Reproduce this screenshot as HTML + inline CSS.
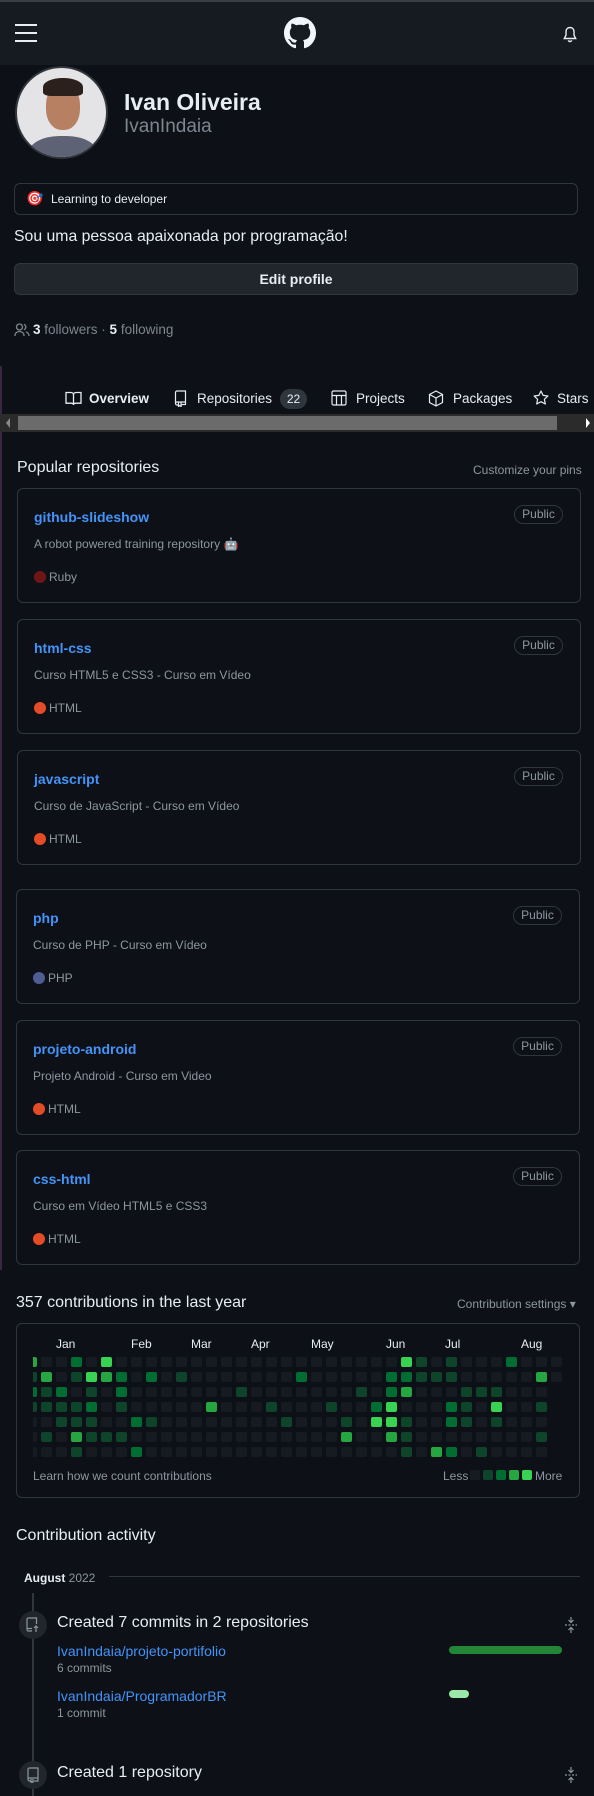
<!DOCTYPE html>
<html><head><meta charset="utf-8"><style>
*{box-sizing:border-box;margin:0;padding:0}
body{width:594px;height:1796px;background:#0d1117;color:#e6edf3;font-family:"Liberation Sans",sans-serif;position:relative;overflow:hidden}
.a{position:absolute;white-space:nowrap}
.card{position:absolute;left:17px;width:564px;height:115px;border:1px solid #30363d;border-radius:6px}
.card .n{position:absolute;left:16px;top:20px;font-size:14px;font-weight:bold;color:#4493f8}
.card .d{position:absolute;left:16px;top:48px;font-size:12px;color:#8d96a0}
.card .l{position:absolute;left:16px;top:81px;font-size:12px;color:#8d96a0}
.card .l i{display:inline-block;width:12px;height:12px;border-radius:50%;vertical-align:-2px;margin-right:3px}
.card .p{position:absolute;right:17px;top:16px;height:19px;width:49px;border:1px solid #30363d;border-radius:10px;font-size:12px;color:#8d96a0;text-align:center;line-height:17px}
.cell{position:absolute;width:11px;height:10px;border-radius:2px}
</style></head><body>
<div class="a" style="left:0;top:0;width:594px;height:65px;background:#161b22;border-top:2px solid #3a3f46"></div>
<svg class="a" style="left:15px;top:24px" width="22" height="18"><rect y="0" width="22" height="2" fill="#e6edf3"/><rect y="8" width="22" height="2" fill="#e6edf3"/><rect y="16" width="22" height="2" fill="#e6edf3"/></svg>
<svg class="a" style="left:284px;top:17px" width="32" height="32" viewBox="0 0 16 16"><path fill="#f0f6fc" d="M8 0C3.58 0 0 3.58 0 8c0 3.54 2.29 6.53 5.47 7.59.4.07.55-.17.55-.38 0-.19-.01-.82-.01-1.49-2.01.37-2.53-.49-2.69-.94-.09-.23-.48-.94-.82-1.13-.28-.15-.68-.52-.01-.53.63-.01 1.08.58 1.23.82.72 1.21 1.87.87 2.33.66.07-.52.28-.87.51-1.07-1.78-.2-3.64-.89-3.64-3.95 0-.87.31-1.59.82-2.15-.08-.2-.36-1.02.08-2.12 0 0 .67-.21 2.2.82.64-.18 1.32-.27 2-.27.68 0 1.36.09 2 .27 1.53-1.04 2.2-.82 2.2-.82.44 1.1.16 1.92.08 2.12.51.56.82 1.27.82 2.15 0 3.07-1.87 3.75-3.65 3.95.29.25.54.73.54 1.48 0 1.07-.01 1.93-.01 2.2 0 .21.15.46.55.38A8.013 8.013 0 0016 8c0-4.42-3.58-8-8-8z"/></svg>
<svg class="a" style="left:562px;top:26px" width="16" height="17" viewBox="0 0 16 17"><path d="M8 1.5c-2.5 0-4 1.8-4 4.2v3.5L2.3 12.5h11.4L12 9.2V5.7c0-2.4-1.5-4.2-4-4.2zM6.3 14.3a1.8 1.8 0 003.4 0" fill="none" stroke="#e6edf3" stroke-width="1.4"/></svg>
<div class="a" style="left:15px;top:66px;width:93px;height:93px;border-radius:50%;background:#e4e4e6;border:2px solid #30363d;overflow:hidden">
<div style="position:absolute;left:11px;top:68px;width:70px;height:40px;border-radius:45% 45% 0 0;background:#5d6375"></div>
<div style="position:absolute;left:29px;top:16px;width:34px;height:46px;border-radius:45%;background:#b88063"></div>
<div style="position:absolute;left:26px;top:10px;width:40px;height:18px;border-radius:50% 50% 20% 20%;background:#2b201c"></div>
</div>
<div class="a" style="left:124px;top:89px;font-size:23px;font-weight:bold;color:#e6edf3">Ivan Oliveira</div>
<div class="a" style="left:124px;top:116px;font-size:19px;color:#7d8590">IvanIndaia</div>
<div class="a" style="left:14px;top:183px;width:564px;height:32px;border:1px solid #30363d;border-radius:6px"></div>
<div class="a" style="left:26px;top:190px;font-size:14px">🎯</div>
<div class="a" style="left:51px;top:192px;font-size:12px;color:#e6edf3">Learning to developer</div>
<div class="a" style="left:14px;top:228px;font-size:15.8px;color:#e6edf3">Sou uma pessoa apaixonada por programação!</div>
<div class="a" style="left:14px;top:263px;width:564px;height:32px;border:1px solid #30363d;border-radius:6px;background:#21262d;text-align:center;font-size:14px;font-weight:bold;line-height:30px">Edit profile</div>
<svg class="a" style="left:14px;top:323px" width="16" height="14" viewBox="0 0 16 14"><circle cx="5.5" cy="4" r="3" fill="none" stroke="#7d8590" stroke-width="1.3"/><path d="M1 13c0-3 2-4.5 4.5-4.5S10 10 10 13M10 1.3a3 3 0 010 5.5M12 8.8c1.8.7 3 2 3 4.2" fill="none" stroke="#7d8590" stroke-width="1.3"/></svg>
<div class="a" style="left:33px;top:322px;font-size:13.5px;color:#7d8590"><b style="color:#e6edf3">3</b> followers · <b style="color:#e6edf3">5</b> following</div>
<div class="a" style="left:0;top:366px;width:2px;height:904px;background:#3c2742"></div>
<svg class="a" style="left:65px;top:391px" width="17" height="15" viewBox="0 0 17 15"><path d="M1 1.5h5c1.4 0 2.5 1 2.5 2.3V14c0-1-1-1.8-2.2-1.8H1zM16 1.5h-5c-1.4 0-2.5 1-2.5 2.3V14c0-1 1-1.8 2.2-1.8H16z" fill="none" stroke="#e6edf3" stroke-width="1.3"/></svg>
<div class="a" style="left:89px;top:391px;font-size:13.5px;font-weight:bold">Overview</div>
<svg class="a" style="left:174px;top:390px" width="13" height="17" viewBox="0 0 13 17"><path d="M1.5 13V2.5a1.5 1.5 0 011.5-1.5h8.5v11H3a1.5 1.5 0 00-1.5 1.5 1.5 1.5 0 001.5 1.5h1.5M7 14.5h4.5V12M4.5 12.5v4l1.3-1 1.3 1v-4" fill="none" stroke="#e6edf3" stroke-width="1.2"/></svg>
<div class="a" style="left:197px;top:391px;font-size:13.5px">Repositories</div>
<div class="a" style="left:280px;top:389px;width:27px;height:20px;border-radius:10px;background:#30363d;font-size:12px;text-align:center;line-height:20px">22</div>
<svg class="a" style="left:331px;top:390px" width="16" height="16" viewBox="0 0 16 16"><rect x="1" y="1" width="14" height="14" rx="1.5" fill="none" stroke="#e6edf3" stroke-width="1.2"/><path d="M1 5.5h14M5.5 5.5V15M10.5 5.5V15" stroke="#e6edf3" stroke-width="1.2"/></svg>
<div class="a" style="left:356px;top:391px;font-size:13.5px">Projects</div>
<svg class="a" style="left:428px;top:390px" width="16" height="17" viewBox="0 0 16 17"><path d="M8 1l6.5 3.5v8L8 16l-6.5-3.5v-8zM1.5 4.5L8 8l6.5-3.5M8 8v8" fill="none" stroke="#e6edf3" stroke-width="1.2"/></svg>
<div class="a" style="left:453px;top:391px;font-size:13.5px">Packages</div>
<svg class="a" style="left:533px;top:390px" width="16" height="16" viewBox="0 0 16 16"><path d="M8 1l2.1 4.4 4.8.6-3.5 3.3.9 4.7L8 11.7 3.7 14l.9-4.7L1.1 6l4.8-.6z" fill="none" stroke="#e6edf3" stroke-width="1.2" stroke-linejoin="round"/></svg>
<div class="a" style="left:557px;top:391px;font-size:13.5px">Stars</div>
<div class="a" style="left:0;top:414px;width:594px;height:18px;background:#2b2b2b"></div>
<div class="a" style="left:18px;top:416px;width:539px;height:14px;background:#6b6b6b"></div>
<div class="a" style="left:6px;top:418px;width:0;height:0;border:5px solid transparent;border-right:4px solid #8a8a8a;border-left:0"></div>
<div class="a" style="left:586px;top:418px;width:0;height:0;border:5px solid transparent;border-left:4px solid #ffffff;border-right:0"></div>
<div class="a" style="left:17px;top:459px;font-size:16px">Popular repositories</div>
<div class="a" style="left:473px;top:463px;font-size:12px;color:#8d96a0">Customize your pins</div>
<div class="card" style="top:488px"><div class="n">github-slideshow</div><div class="p">Public</div><div class="d">A robot powered training repository 🤖</div><div class="l"><i style="background:#701516"></i>Ruby</div></div>
<div class="card" style="top:619px"><div class="n">html-css</div><div class="p">Public</div><div class="d">Curso HTML5 e CSS3 - Curso em Vídeo</div><div class="l"><i style="background:#e34c26"></i>HTML</div></div>
<div class="card" style="top:750px"><div class="n">javascript</div><div class="p">Public</div><div class="d">Curso de JavaScript - Curso em Vídeo</div><div class="l"><i style="background:#e34c26"></i>HTML</div></div>
<div class="card" style="top:889px;left:16px"><div class="n">php</div><div class="p">Public</div><div class="d">Curso de PHP - Curso em Vídeo</div><div class="l"><i style="background:#4f5d95"></i>PHP</div></div>
<div class="card" style="top:1020px;left:16px"><div class="n">projeto-android</div><div class="p">Public</div><div class="d">Projeto Android - Curso em Video</div><div class="l"><i style="background:#e34c26"></i>HTML</div></div>
<div class="card" style="top:1150px;left:16px"><div class="n">css-html</div><div class="p">Public</div><div class="d">Curso em Vídeo HTML5 e CSS3</div><div class="l"><i style="background:#e34c26"></i>HTML</div></div>
<div class="a" style="left:16px;top:1294px;font-size:16px">357 contributions in the last year</div>
<div class="a" style="left:457px;top:1297px;font-size:12px;color:#8d96a0">Contribution settings ▾</div>
<div class="a" style="left:16px;top:1323px;width:564px;height:175px;border:1px solid #30363d;border-radius:6px"></div>
<div class="a" style="top:1337px;font-size:12px;color:#e6edf3;left:0;width:594px;height:14px">
<span class="a" style="left:56px">Jan</span><span class="a" style="left:131px">Feb</span><span class="a" style="left:191px">Mar</span><span class="a" style="left:251px">Apr</span><span class="a" style="left:311px">May</span><span class="a" style="left:386px">Jun</span><span class="a" style="left:445px">Jul</span><span class="a" style="left:521px">Aug</span></div>
<div id="g" class="a" style="left:33px;top:1357px;width:530px;height:105px;overflow:hidden"></div>
<div class="a" style="left:33px;top:1469px;font-size:12px;color:#8d96a0">Learn how we count contributions</div>
<div class="a" style="left:443px;top:1469px;font-size:12px;color:#8d96a0">Less</div>
<div class="a" style="left:470px;top:1470px;width:10px;height:10px;border-radius:2px;background:#161b22"></div>
<div class="a" style="left:483px;top:1470px;width:10px;height:10px;border-radius:2px;background:#0e4429"></div>
<div class="a" style="left:496px;top:1470px;width:10px;height:10px;border-radius:2px;background:#006d32"></div>
<div class="a" style="left:509px;top:1470px;width:10px;height:10px;border-radius:2px;background:#26a641"></div>
<div class="a" style="left:522px;top:1470px;width:10px;height:10px;border-radius:2px;background:#39d353"></div>
<div class="a" style="left:535px;top:1469px;font-size:12px;color:#8d96a0">More</div>
<div class="a" style="left:16px;top:1527px;font-size:16px">Contribution activity</div>
<div class="a" style="left:24px;top:1571px;font-size:12px;color:#8d96a0"><b style="color:#e6edf3">August</b> 2022</div>
<div class="a" style="left:109px;top:1576px;width:471px;height:1px;background:#30363d"></div>
<div class="a" style="left:32px;top:1593px;width:2px;height:203px;background:#30363d"></div>
<div class="a" style="left:19px;top:1611px;width:28px;height:28px;border-radius:50%;background:#21262d"></div>
<svg class="a" style="left:26px;top:1617px" width="14" height="16" viewBox="0 0 14 16"><path d="M6 14H2.5A1.5 1.5 0 011 12.5v-10A1.5 1.5 0 012.5 1h8v6M1 11.5h5M10 15V9M8 11l2-2 2 2" fill="none" stroke="#8d96a0" stroke-width="1.2"/></svg>
<div class="a" style="left:57px;top:1614px;font-size:16px">Created 7 commits in 2 repositories</div>
<svg class="a" style="left:565px;top:1617px" width="12" height="16" viewBox="0 0 12 16"><path d="M6 0v5M3.5 3L6 5.5 8.5 3M6 16v-5M3.5 13L6 10.5 8.5 13" fill="none" stroke="#8d96a0" stroke-width="1.2"/><path d="M0 8h12" stroke="#8d96a0" stroke-width="1.2" stroke-dasharray="2 1.5"/></svg>
<div class="a" style="left:57px;top:1643px;font-size:14px;color:#4493f8">IvanIndaia/projeto-portifolio</div>
<div class="a" style="left:57px;top:1661px;font-size:12px;color:#8d96a0">6 commits</div>
<div class="a" style="left:57px;top:1688px;font-size:14px;color:#4493f8">IvanIndaia/ProgramadorBR</div>
<div class="a" style="left:57px;top:1706px;font-size:12px;color:#8d96a0">1 commit</div>
<div class="a" style="left:449px;top:1646px;width:113px;height:8px;border-radius:4px;background:#238636"></div>
<div class="a" style="left:449px;top:1690px;width:20px;height:8px;border-radius:4px;background:#9be9a8"></div>
<div class="a" style="left:19px;top:1761px;width:28px;height:28px;border-radius:50%;background:#21262d"></div>
<svg class="a" style="left:27px;top:1767px" width="12" height="16" viewBox="0 0 12 16"><path d="M1 12V2.5A1.5 1.5 0 012.5 1h8.5v10H2.5A1.5 1.5 0 001 12.5 1.5 1.5 0 002.5 14H4M7 14h4v-3M4 12v3.5l1-.8 1 .8V12" fill="none" stroke="#8d96a0" stroke-width="1.2"/></svg>
<div class="a" style="left:57px;top:1764px;font-size:16px">Created 1 repository</div>
<svg class="a" style="left:565px;top:1767px" width="12" height="16" viewBox="0 0 12 16"><path d="M6 0v5M3.5 3L6 5.5 8.5 3M6 16v-5M3.5 13L6 10.5 8.5 13" fill="none" stroke="#8d96a0" stroke-width="1.2"/><path d="M0 8h12" stroke="#8d96a0" stroke-width="1.2" stroke-dasharray="2 1.5"/></svg>
<script>
var C=['#161b22','#0e4429','#006d32','#26a641','#39d353'];
var L=[{0:3,3:2,5:4,25:4,26:1,28:1,32:2},{0:1,1:3,3:1,4:4,5:3,6:2,8:2,10:1,18:2,24:2,25:2,26:1,27:1,28:1,34:3},{0:2,1:1,2:2,4:1,6:2,14:1,22:1,24:2,25:3,29:1,30:1,31:1},{0:1,1:1,2:1,3:1,4:2,6:1,12:3,16:1,20:1,23:2,24:4,28:2,29:1,31:4,34:1},{2:1,3:1,4:1,7:2,8:1,17:1,21:1,23:4,24:4,25:1,28:2,29:1,31:1},{1:1,3:3,4:1,5:1,6:1,21:3,24:3,25:1,34:1},{3:1,7:2,25:1,27:3,28:2,30:1}];
var g=document.getElementById('g'),h='';
for(var r=0;r<7;r++){var mx=(r<2)?35:34;for(var c=0;c<=mx;c++){var v=L[r][c]||0;var x=-7+c*15;h+='<div class="cell" style="left:'+x+'px;top:'+(r*15)+'px;background:'+C[v]+'"></div>';}}
g.innerHTML=h;
</script>
</body></html>
